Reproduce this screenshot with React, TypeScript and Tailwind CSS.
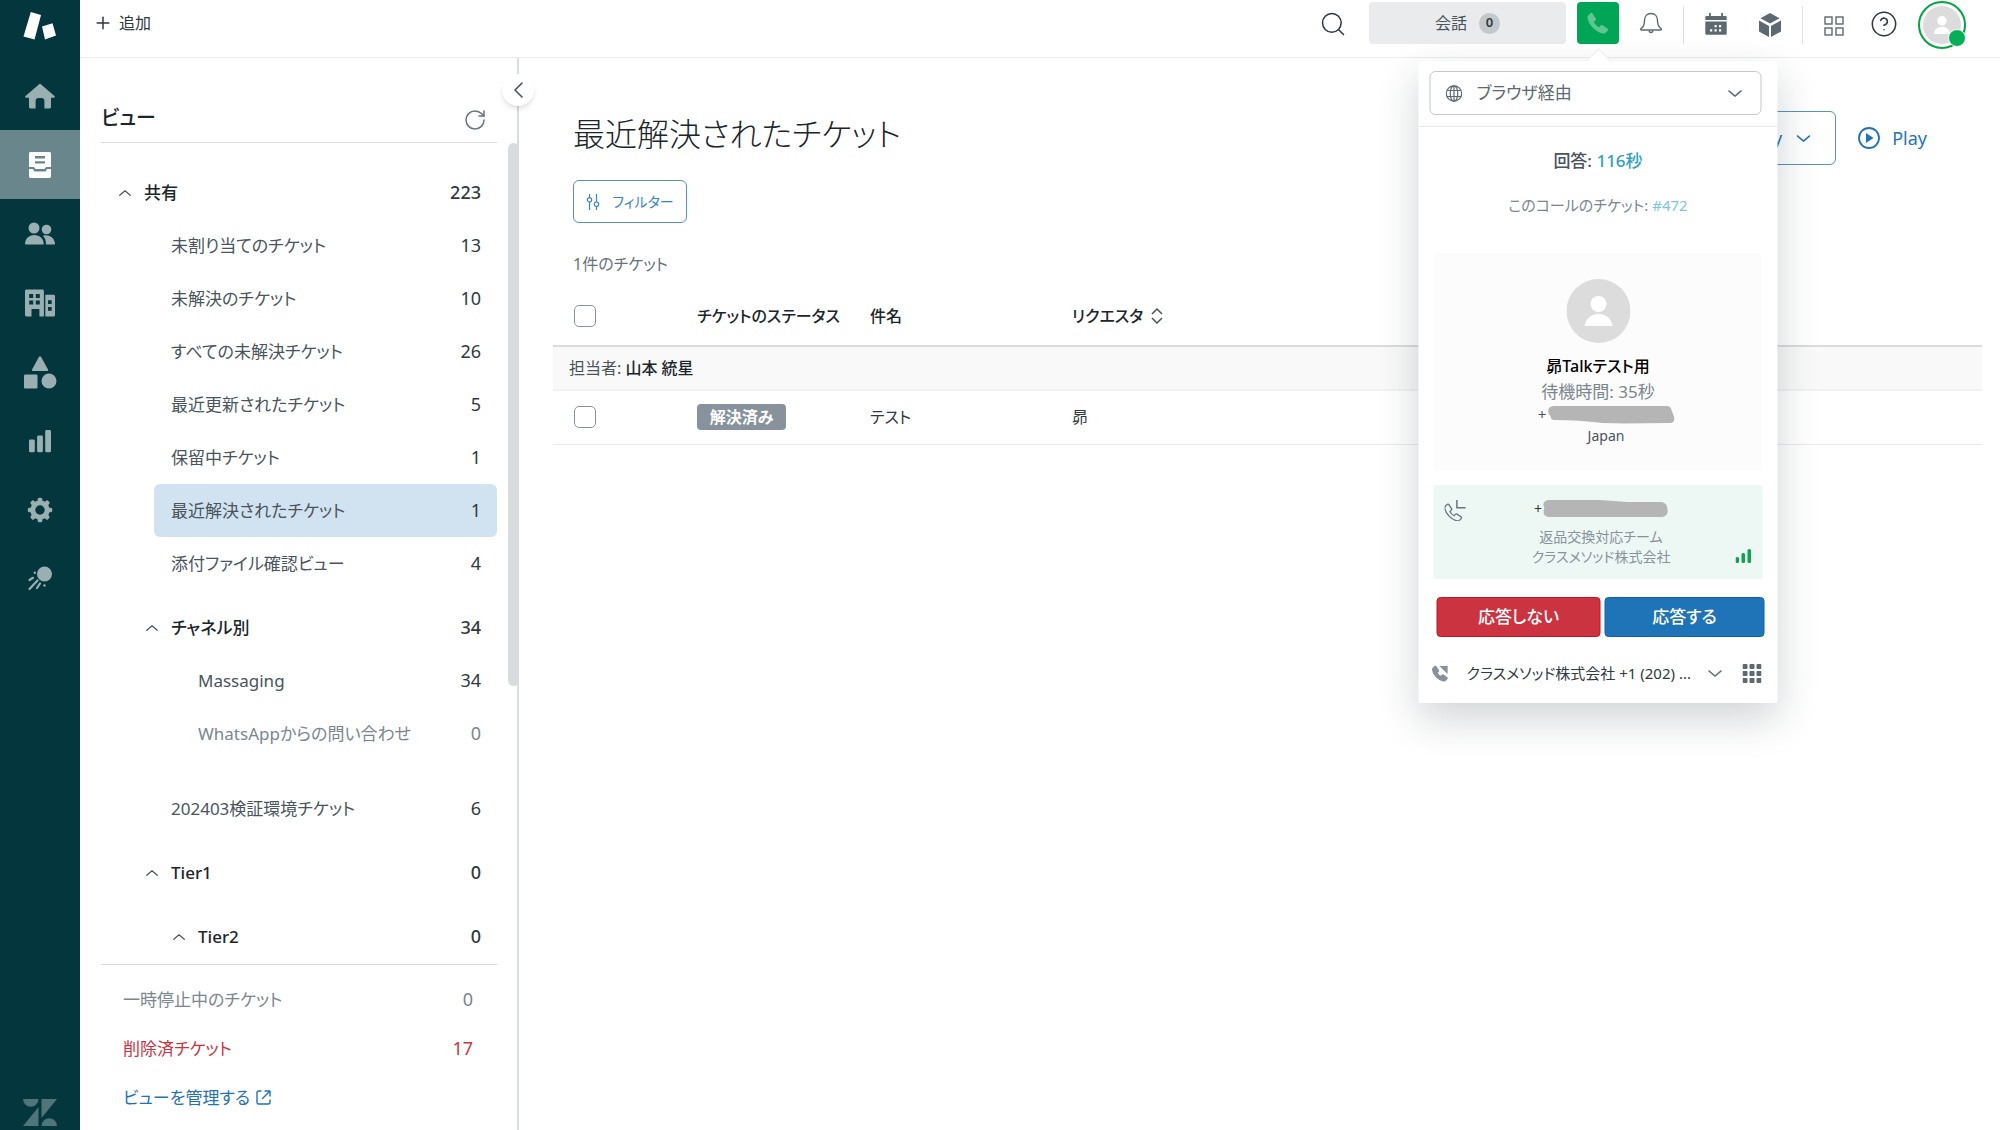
import React from 'react';
import { CircleHelp, Plus, RotateCw, Search } from 'lucide-react';

interface ViewItem {
    label: string;
    count: number;
    level: 1 | 2 | 3;
    heading?: boolean;
    muted?: boolean;
    selected?: boolean;
    space?: 'sm' | 'lg';
}

const views: ViewItem[] = [
    { label: '共有', count: 223, level: 1, heading: true },
    { label: '未割り当てのチケット', count: 13, level: 2 },
    { label: '未解決のチケット', count: 10, level: 2 },
    { label: 'すべての未解決チケット', count: 26, level: 2 },
    { label: '最近更新されたチケット', count: 5, level: 2 },
    { label: '保留中チケット', count: 1, level: 2 },
    { label: '最近解決されたチケット', count: 1, level: 2, selected: true },
    { label: '添付ファイル確認ビュー', count: 4, level: 2 },
    { label: 'チャネル別', count: 34, level: 2, heading: true, space: 'sm' },
    { label: 'Massaging', count: 34, level: 3 },
    { label: 'WhatsAppからの問い合わせ', count: 0, level: 3, muted: true },
    { label: '202403検証環境チケット', count: 6, level: 2, space: 'lg' },
    { label: 'Tier1', count: 0, level: 2, heading: true, space: 'sm' },
    { label: 'Tier2', count: 0, level: 3, heading: true, space: 'sm' },
];

const levelPadding = { 1: 'pl-[26px]', 2: 'pl-[53px]', 3: 'pl-20' };
const spacing = { sm: 'mt-[11px]', lg: 'mt-[22px]' };

const navItems = [
    {
        label: 'ホーム',
        icon: (
            <path d="M16 3.500 30.500 16c.7.700.200 1.800-.7 1.800H27V27c0 .8-.6 1.400-1.400 1.400h-5.200V21a3 3 0 0 0-3-3h-2.800a3 3 0 0 0-3 3v7.400H6.400C5.600 28.400 5 27.800 5 27v-9.200H2.200c-.9 0-1.400-1.100-.7-1.800z" />
        ),
    },
    {
        label: 'ビュー',
        active: true,
        icon: (
            <>
                <path fillRule="evenodd" d="M6.500 3h19c.8 0 1.500.7 1.500 1.500V18h-5l-1.500 2h-9L10 18H5V4.500C5 3.700 5.700 3 6.500 3zM11 7v2.400h10V7zm0 5.200v2.400h10v-2.400z" />
                <path d="M5 20h4l1.500 2.500h11L23 20h4v7.500c0 .8-.7 1.500-1.500 1.500h-19C5.700 29 5 28.300 5 27.500z" />
            </>
        ),
    },
    {
        label: '顧客',
        icon: (
            <>
                <circle cx="10" cy="10" r="5.500" />
                <path d="M1 26.500c0-6 4-9.500 9.300-9.500s9.400 3.500 9.400 9.500z" />
                <circle cx="22.500" cy="11.500" r="4.800" />
                <path d="M19 17.700c5-1.500 12 1.500 12 8.800h-9c0-3.800-1-6.600-3-8.800z" />
            </>
        ),
    },
    {
        label: '組織',
        icon: (
            <path fillRule="evenodd" d="M2.500 2.500h16c.8 0 1.400.6 1.400 1.400V29.500h-4.500V22H7.500v7.500H2.400c-.8 0-1.400-.6-1.400-1.400V3.900c0-.8.7-1.400 1.500-1.400zM5.200 7v4h4V7zm6.600 0v4h4V7zm-6.600 6.600v4h4v-4zm6.600 0v4h4v-4zM21.300 7.800h8.300c.8 0 1.400.6 1.400 1.400v19c0 .8-.6 1.400-1.400 1.400h-8.300zm2.700 5.400v3.800h3.700v-3.800zm0 6.800v3.800h3.700V20z" />
        ),
    },
    {
        label: 'オブジェクト',
        icon: (
            <>
                <path d="M15 .8c.5-.9 1.500-.9 2 0L24 13.400c.4.800 0 1.600-.9 1.600H9c-.9 0-1.300-.8-.9-1.600z" />
                <rect x="0" y="18.500" width="13.500" height="14" rx="1.300" />
                <circle cx="25" cy="25" r="7.500" />
            </>
        ),
    },
    {
        label: 'レポート',
        icon: (
            <>
                <rect x="5" y="14.500" width="5.800" height="12.800" rx="1.400" />
                <rect x="13.100" y="10.500" width="5.800" height="16.800" rx="1.400" />
                <rect x="21.200" y="5" width="5.800" height="22.300" rx="1.400" />
            </>
        ),
    },
    {
        label: '設定',
        icon: (
            <>
                <circle cx="16" cy="16" r="7.200" fill="none" stroke="currentColor" strokeWidth="5" />
                {[0, 45, 90, 135, 180, 225, 270, 315].map((angle) => (
                    <rect key={angle} x="13.700" y="3.800" width="4.600" height="5" rx="1.500" transform={`rotate(${angle} 16 16)`} />
                ))}
            </>
        ),
    },
    {
        label: 'マーケット',
        icon: (
            <>
                <circle cx="20.500" cy="11" r="7.500" />
                <path d="M5.500 17 9 14.800M5.500 26l8-8.500M13 25l3-4.500" fill="none" stroke="currentColor" strokeWidth="2.200" strokeLinecap="round" />
                <circle cx="10.800" cy="9.800" r="1.200" />
                <circle cx="20.500" cy="22.500" r="1.200" />
            </>
        ),
    },
];

const Chevron: React.FC<{ className: string; up?: boolean }> = ({ className, up }) => (
    <svg className={className} viewBox="0 0 16 8" fill="none" stroke="currentColor" strokeWidth="1.600" strokeLinecap="round" strokeLinejoin="round">
        <path d={up ? 'm1 7 7-6 7 6' : 'm1 1 7 6 7-6'} />
    </svg>
);

const NavRail: React.FC = () => (
    <nav className="flex w-20 shrink-0 flex-col items-center bg-[#03363d]">
        <div className="flex h-[61px] w-full items-start justify-center pt-[11px]">
            <svg className="h-8 w-9" viewBox="0 0 36 32" fill="#fff">
                <path d="M8.800 1 19 4 12.500 28.500 1.500 25.500z" />
                <path d="m20 15.500 10.500-3.300L34 24.500l-11 4z" />
            </svg>
        </div>
        {navItems.map((item) => (
            <button
                key={item.label}
                aria-label={item.label}
                className={`flex h-[69px] w-full items-center justify-center ${item.active ? 'bg-[#68868b] text-white' : 'text-[#9aafb1]'}`}
            >
                <svg className="size-8 overflow-visible" viewBox="0 0 32 32" fill="currentColor">{item.icon}</svg>
            </button>
        ))}
        <svg className="mt-auto mb-1 h-[27px] w-[34px]" viewBox="0 0 34 27" fill="#4f7479">
            <path d="M0 0h15.500a7.750 7.750 0 0 1-15.500 0zM15.500 8v19H0zM18.500 0H34L18.500 19zM18.500 27a7.750 7.750 0 0 1 15.500 0z" />
        </svg>
    </nav>
);

const Person: React.FC<{ className: string }> = ({ className }) => (
    <svg className={className} viewBox="0 0 64 64">
        <circle cx="32" cy="32" r="32" fill="#dcdcdc" />
        <circle cx="32" cy="25" r="8" fill="#fff" />
        <path d="M18 47c1-7 6-12 14-12s13 5 14 12z" fill="#fff" />
    </svg>
);

const handset = 'M6.600 2.500 9.800 7.400c.4.700.3 1.500-.3 2L7.800 11c1.200 2.300 2.900 4 5.200 5.200l1.600-1.700c.5-.6 1.400-.7 2-.3l4.900 3.200c.8.5.9 1.500.3 2.200l-1.900 2c-.8.800-2 1.200-3.200.9C9.800 21.100 3 14.300 1.500 7.300c-.2-1.100.1-2.300.9-3.100l2-2c.6-.6 1.700-.5 2.200.3z';

const TopBar: React.FC = () => (
    <header className="flex h-[58px] shrink-0 items-start border-b border-[#ebedee] pr-[34px]">
        <button className="ml-[13px] flex h-[46px] items-center gap-1.5 text-[16px] text-[#2f3941]">
            <Plus className="size-5" strokeWidth={1.8} />
            追加
        </button>
        <button aria-label="検索" className="ml-auto flex h-12 items-center">
            <Search className="size-7 text-[#2f3941]" strokeWidth={1.3} />
        </button>
        <button className="mt-0.5 ml-[22px] flex h-[42px] w-[197px] items-center justify-center gap-3 rounded bg-[#e9ebec] text-[16px] text-[#49545c]">
            会話
            <span className="flex size-[21px] items-center justify-center rounded-full bg-[#c2c8cc] text-[13px] font-semibold text-[#2f3941]">0</span>
        </button>
        <div className="relative mt-0.5 ml-[11px]">
            <button aria-label="通話" className="flex h-[42px] w-[42px] items-center justify-center rounded bg-[#00a656]">
                <svg className="size-6" viewBox="0 0 24 24" fill="#5cc890"><path d={handset} /></svg>
            </button>
            <TalkPanel />
        </div>
        <button aria-label="通知" className="ml-5 flex h-[46px] items-center">
            <svg className="size-6" viewBox="0 0 24 24" fill="none" stroke="#5c6970" strokeWidth="1.400" strokeLinejoin="round">
                <path d="M12 2.500c-4 0-6.500 3-6.500 7 0 4.500-1 6.500-3.500 8-.8.500-.5 1.500.5 1.500h19c1 0 1.300-1 .5-1.500-2.500-1.500-3.500-3.500-3.500-8 0-4-2.500-7-6.500-7z" />
                <path d="M10.200 19.500c0 2.600 3.600 2.600 3.600 0" />
            </svg>
        </button>
        <div className="mt-1.5 ml-5 h-[38px] w-px bg-[#e0e3e5]" />
        <button aria-label="カレンダー" className="ml-5 flex h-12 items-center">
            <svg className="size-6" viewBox="0 0 24 24" fill="#5c6970">
                <path d="M5 1h1.800v3h10.400V1H19v3h2.500c.8 0 1.200.5 1.200 1.200V8H1.300V5.200C1.300 4.500 1.800 4 2.500 4H5z" />
                <path fillRule="evenodd" d="M1.300 9.500h21.400v12c0 .8-.5 1.200-1.200 1.200h-19c-.7 0-1.200-.4-1.200-1.200zM10.500 13v2.200h2.200V13zm4.500 0v2.200h2.200V13zm-9 4.200v2.200h2.200v-2.200zm4.500 0v2.200h2.200v-2.200zm4.500 0v2.200h2.200v-2.200z" />
            </svg>
        </button>
        <button aria-label="アプリ" className="ml-[30px] flex h-[50px] items-center">
            <svg className="size-6" viewBox="0 0 24 24" fill="#5c6970">
                <path d="M12 0 21.500 5.200 12 10.400 2.500 5.200zM1 7.500l10 5.400V24L1 18.500zM23 7.500l-10 5.400V24l10-5.500z" />
            </svg>
        </button>
        <div className="mt-1.5 ml-5 h-[38px] w-px bg-[#e0e3e5]" />
        <button aria-label="製品" className="ml-[21px] flex h-[52px] items-center">
            <svg className="size-5" viewBox="0 0 20 20" fill="none" stroke="#5c6970" strokeWidth="1.400">
                <rect x="1" y="1" width="7" height="7" />
                <rect x="12" y="1" width="7" height="7" />
                <rect x="1" y="12" width="7" height="7" />
                <rect x="12" y="12" width="7" height="7" />
            </svg>
        </button>
        <button aria-label="ヘルプ" className="ml-[26px] flex h-12 items-center">
            <CircleHelp className="size-7 text-[#2f3941]" strokeWidth={1.3} />
        </button>
        <button aria-label="プロフィール" className="relative mt-px ml-5 flex size-12 items-center justify-center rounded-full border-2 border-[#03a543]">
            <Person className="size-[38px]" />
            <span className="absolute -right-0.5 bottom-0 size-[18px] rounded-full border border-white bg-[#04af57]" />
        </button>
    </header>
);

const ViewsPanel: React.FC = () => (
    <aside className="relative flex w-[439px] shrink-0 flex-col border-r-2 border-[#d8dcde] pr-5 pl-[21px] text-[17px]">
        <div className="flex h-[85px] items-end justify-between border-b border-[#d8dcde] pb-2.5">
            <h2 className="text-[20px] leading-7 font-medium text-[#1b252c]">ビュー</h2>
            <button aria-label="更新" className="mr-2.5">
                <RotateCw className="size-6 text-[#68737d]" strokeWidth={1.5} />
            </button>
        </div>
        <ul className="border-b border-[#d8dcde] pt-[23px] pb-px">
            {views.map((view) => (
                <li key={view.label} className={`${levelPadding[view.level]} ${view.space ? spacing[view.space] : ''}`}>
                    <a
                        href="#"
                        className={`flex h-[53px] items-center rounded-md pr-4 ${view.selected ? 'bg-[#d1e3f0]' : ''} ${view.heading ? '-ml-2 font-medium text-[#1b252c]' : 'pl-[17px]'} ${view.muted ? 'text-[#7b868e]' : 'text-[#49545c]'}`}
                    >
                        {view.heading && <Chevron up className="mr-[13px] h-1.5 w-3" />}
                        <span className={view.heading ? 'text-[#1b252c]' : ''}>{view.label}</span>
                        <span className={`ml-auto text-[18px] ${view.muted ? '' : 'text-[#2f3941]'}`}>{view.count}</span>
                    </a>
                </li>
            ))}
        </ul>
        <ul className="pt-2.5 pr-6 pl-[22px]">
            <li>
                <a href="#" className="flex h-[49px] items-center justify-between text-[#7b868e]">
                    一時停止中のチケット
                    <span className="text-[18px]">0</span>
                </a>
            </li>
            <li>
                <a href="#" className="flex h-[49px] items-center justify-between text-[#cc3340]">
                    削除済チケット
                    <span className="text-[18px]">17</span>
                </a>
            </li>
            <li>
                <a href="#" className="flex h-[49px] items-center gap-1.5 text-[#1f73b7]">
                    ビューを管理する
                    <svg className="size-[15px]" viewBox="0 0 15 15" fill="none" stroke="currentColor" strokeWidth="1.400" strokeLinecap="round" strokeLinejoin="round">
                        <path d="M5 1H2.500C1.700 1 1 1.700 1 2.500v10c0 .8.7 1.500 1.500 1.500h10c.8 0 1.500-.7 1.500-1.500V10M9 1h5v5M14 1 6.500 8.500" />
                    </svg>
                </a>
            </li>
        </ul>
        <div className="absolute top-[85px] -right-0.5 h-[543px] w-[11px] rounded-full bg-[#d8dcde]" />
        <button aria-label="折りたたむ" className="absolute top-4 -right-[17px] flex size-8 items-center justify-center rounded-full bg-white text-[#49545c] shadow-md">
            <svg className="h-4 w-[9px]" viewBox="0 0 9 16" fill="none" stroke="currentColor" strokeWidth="1.600" strokeLinecap="round" strokeLinejoin="round">
                <path d="M8 1 1 8l7 7" />
            </svg>
        </button>
    </aside>
);

const checkbox = 'block size-[22px] appearance-none rounded-[5px] border border-[#87929d] bg-white';

const TicketList: React.FC = () => (
    <main className="min-w-0 flex-1 pr-[18px] pl-[34px]">
        <div className="flex items-start pr-[55px] pl-5">
            <h1 className="mt-[52px] text-[32px] leading-[48px] font-light text-[#1b252c]">最近解決されたチケット</h1>
            <button className="mt-[53px] ml-auto flex h-[54px] items-center gap-3.5 rounded-md border border-[#5b90c5] px-6 text-[18px] text-[#1f73b7]">
                Play
                <Chevron className="h-[7px] w-[15px]" />
            </button>
            <button className="mt-[53px] ml-[22px] flex h-[54px] items-center gap-3 text-[18px] text-[#1f73b7]">
                <svg className="size-[22px]" viewBox="0 0 22 22">
                    <circle cx="11" cy="11" r="10" fill="none" stroke="currentColor" strokeWidth="1.800" />
                    <path d="m8 6 7.500 5L8 16z" fill="currentColor" />
                </svg>
                Play
            </button>
        </div>
        <button className="mt-[15px] ml-5 flex h-[43px] w-[114px] items-center justify-center gap-3 rounded-md border border-[#5b90c5] text-[14px] text-[#3a84c4]">
            <svg className="h-[18px] w-[14px]" viewBox="0 0 14 18" fill="none" stroke="currentColor" strokeWidth="1.200">
                <path d="M3.500 1v3.500M3.500 9v8M10.500 1v8M10.500 13.500V17" />
                <circle cx="3.500" cy="6.800" r="2.200" />
                <circle cx="10.500" cy="11.200" r="2.200" />
            </svg>
            フィルター
        </button>
        <p className="mt-[27px] ml-5 text-[16px] leading-7 text-[#68737d]">1件のチケット</p>
        <table className="mt-2 w-full table-fixed border-collapse text-left text-[16px] text-[#2f3941]">
            <colgroup>
                <col className="w-36" />
                <col className="w-[173px]" />
                <col className="w-[202px]" />
                <col />
            </colgroup>
            <thead>
                <tr className="h-[60px] border-b-2 border-[#d8dcde] text-[#1b252c]">
                    <th className="pl-[21px]"><input type="checkbox" aria-label="すべて選択" className={checkbox} /></th>
                    <th className="font-medium whitespace-nowrap">チケットのステータス</th>
                    <th className="font-medium">件名</th>
                    <th className="font-medium">
                        <button className="flex items-center gap-2">
                            リクエスタ
                            <svg className="h-4 w-3" viewBox="0 0 12 16" fill="none" stroke="#49545c" strokeWidth="1.500">
                                <path d="m1 6 5-5 5 5M1 10l5 5 5-5" />
                            </svg>
                        </button>
                    </th>
                </tr>
            </thead>
            <tbody>
                <tr className="h-11 border-b-2 border-[#f1f2f3] bg-[#f9f9f9]">
                    <td colSpan={4} className="pl-4 text-[#49545c]">担当者: <span className="font-medium text-[#1b252c]">山本 統星</span></td>
                </tr>
                <tr className="h-[54px] border-b border-[#e9ebed]">
                    <td className="pl-[21px]"><input type="checkbox" aria-label="チケットを選択" className={checkbox} /></td>
                    <td>
                        <span className="flex h-[26px] w-[89px] items-center justify-center rounded bg-[#87929d] text-[16px] font-bold text-white">解決済み</span>
                    </td>
                    <td>テスト</td>
                    <td>昴</td>
                </tr>
            </tbody>
        </table>
    </main>
);

const TalkPanel: React.FC = () => (
    <section className="absolute top-[59px] left-1/2 z-10 flex w-[359px] -translate-x-1/2 flex-col rounded-xs bg-white pb-4 shadow-[0_16px_40px_rgba(23,40,50,0.2)]">
        <svg className="absolute -top-3 left-1/2 h-[13px] w-6 -translate-x-1/2" viewBox="0 0 24 13">
            <path d="M0 13v-1L12 0l12 12v1z" fill="#fff" />
            <path d="M0 12 12 0l12 12" fill="none" stroke="#e3e6e8" />
        </svg>
        <div className="border-b border-[#e9ebed] pt-2.5 pr-4 pb-[11px] pl-[11px]">
            <div className="relative flex h-11 items-center text-[#5c6970]">
                <svg className="absolute left-4 size-[17px]" viewBox="0 0 17 17" fill="none" stroke="currentColor" strokeWidth="1.200">
                    <circle cx="8.500" cy="8.500" r="7.700" />
                    <ellipse cx="8.500" cy="8.500" rx="3.800" ry="7.700" />
                    <path d="M8.500.8v15.400M1.500 5.500h14M1.500 11.500h14" />
                </svg>
                <select aria-label="通話方法" className="h-11 w-full appearance-none rounded-md border border-[#c2c8cc] pl-[46px] text-[17px]">
                    <option>ブラウザ経由</option>
                </select>
                <Chevron className="absolute right-[19px] h-[7px] w-[15px]" />
            </div>
        </div>
        <p className="mt-5 text-center text-[17px] leading-7 font-medium text-[#49545c]">回答: <span className="text-[#30a1c0]">116秒</span></p>
        <p className="mt-4 text-center text-[15px] leading-7 text-[#7b868e]">このコールのチケット: <a href="#" className="text-[#7cc5dd]">#472</a></p>
        <div className="mx-4 mt-[34px] flex h-[217px] flex-col items-center bg-[#fcfcfc] pt-[26px]">
            <Person className="size-16" />
            <p className="mt-2.5 text-[16px] leading-[26px] font-medium text-black">昴Talkテスト用</p>
            <p className="text-[17px] leading-[26px] text-[#7b868e]">待機時間: 35秒</p>
            <div className="-mt-px flex h-5 items-center pl-4 text-[15px] text-[#49545c]">
                +
                <svg className="h-5 w-32" viewBox="0 0 128 20" fill="#b5b5b5">
                    <path d="M7 2h113c3 0 4 1 5 4l3 8c0 4-2 5-6 5-22 0-44 1-66 0-16-2-32-3-47-3-4 0-5-2-5-4-3-3-4-9 3-10z" />
                </svg>
            </div>
            <p className="pl-4 text-[14px] leading-6 text-[#49545c]">Japan</p>
        </div>
        <div className="mx-[15px] mt-[15px] flex h-[94px] justify-between rounded-xs bg-[#edf8f4] px-[11px] pt-3.5 pb-4">
            <svg className="size-[22px]" viewBox="0 0 24 24" fill="none" stroke="#68737d" strokeWidth="1.600">
                <path d={handset} transform="translate(-1 4) scale(.88)" />
                <path d="M13.500 1v8.500H23" />
            </svg>
            <div className="text-center text-[14px] leading-5 text-[#87929d]">
                <div className="flex items-center justify-center text-[#2f3941]">
                    +
                    <svg className="h-[18px] w-[126px]" viewBox="0 0 126 18" fill="#b5b5b5">
                        <path d="M7 0h50l28 2h32c5 0 8 2 8 8 1 5-3 7-7 7H7c-6 0-7-5-5-9C-1 4 2 0 7 0z" />
                    </svg>
                </div>
                <p className="mt-2">返品交換対応チーム</p>
                <p>クラスメソッド株式会社</p>
            </div>
            <svg className="mt-auto h-[14px] w-4" viewBox="0 0 16 14" fill="#12a150">
                <rect x="0" y="8" width="3.500" height="6" rx="1.500" />
                <rect x="6" y="4" width="3.500" height="10" rx="1.500" />
                <rect x="12" y="0" width="3.500" height="14" rx="1.500" />
            </svg>
        </div>
        <div className="mt-[18px] mr-[13px] ml-[18px] flex h-10 gap-1 text-[17px] font-medium text-white">
            <button className="w-[164px] rounded border border-[#c01526] bg-[#cc3340]">応答しない</button>
            <button className="flex-1 rounded border border-[#0a62b0] bg-[#1f73b7]">応答する</button>
        </div>
        <div className="mt-[22px] mr-4 ml-[13px] flex h-7 items-center text-[15px] text-[#2f3941]">
            <svg className="size-[17px]" viewBox="0 0 24 24" fill="#87929d" stroke="#87929d" strokeWidth="1.500">
                <path d={handset} />
                <path d="M13 2h9v9z" />
            </svg>
            <span className="ml-[18px] whitespace-nowrap">クラスメソッド株式会社 +1 (202) ...</span>
            <button aria-label="番号を選択" className="ml-auto text-[#68737d]">
                <Chevron className="h-[7px] w-[15px]" />
            </button>
            <button aria-label="ダイヤルパッド" className="ml-5">
                <svg className="size-[19px]" viewBox="0 0 19 19" fill="#5c6970">
                    {[0, 7, 14].map((y) => [0, 7, 14].map((x) => <rect key={`${x}-${y}`} x={x} y={y} width="5" height="5" rx="1" />))}
                </svg>
            </button>
        </div>
    </section>
);

const App: React.FC = () => (
    <div className="flex min-h-screen bg-white font-['Noto_Sans','Noto_Sans_CJK_JP',sans-serif] [font-feature-settings:'palt']">
        <NavRail />
        <div className="flex min-w-0 flex-1 flex-col">
            <TopBar />
            <div className="flex flex-1">
                <ViewsPanel />
                <TicketList />
            </div>
        </div>
    </div>
);

export default App;
